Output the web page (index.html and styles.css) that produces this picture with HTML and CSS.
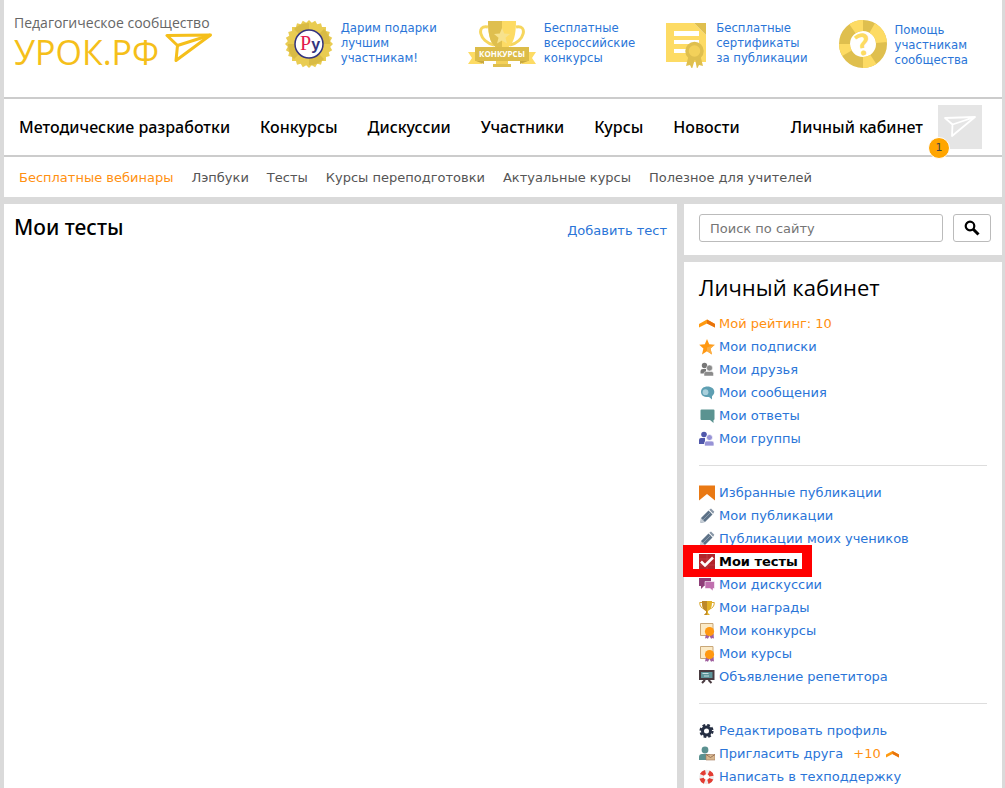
FILE: index.html
```html
<!DOCTYPE html>
<html lang="ru">
<head>
<meta charset="utf-8">
<meta name="viewport" content="width=device-width, initial-scale=1">
<title>Мои тесты — УРОК.РФ</title>
<link rel="stylesheet" href="styles.css">
</head>
<body>
<header class="site-header">
  <div class="top">
    <a class="logo" href="#">
      <span class="logo-tagline">Педагогическое сообщество</span>
      <span class="logo-row">
        <span class="logo-name">УРОК.РФ</span>
        <svg class="logo-plane" viewBox="0 0 48 30" fill="none" stroke="#f5bf1a" stroke-width="3" stroke-linejoin="round"><path d="M2 2.500 45.500 2 11 27.500 12.500 12.500z"/><path d="M45.500 2 12.500 12.500"/></svg>
      </span>
    </a>
    <nav class="promos" aria-label="Возможности">
      <a class="promo" href="#">
        <svg width="48" height="50" viewBox="0 0 48 50">
          <g fill="#e9cc52">
            <path id="seal-square" d="M24 1l24 24-24 24L0 25z"/>
            <use href="#seal-square" transform="rotate(15 24 25)"/>
            <use href="#seal-square" transform="rotate(30 24 25)"/>
            <use href="#seal-square" transform="rotate(45 24 25)"/>
            <use href="#seal-square" transform="rotate(60 24 25)"/>
            <use href="#seal-square" transform="rotate(75 24 25)"/>
          </g>
          <path d="M24 25V4a21 21 0 0 0-15 6zM24 25H3a21 21 0 0 0 6 15zM24 25v21a21 21 0 0 0 15-6zM24 25h21a21 21 0 0 0-6-15z" fill="#d9bb45"/>
          <circle cx="24" cy="25" r="14" fill="#fff" stroke="#34347f" stroke-width="1.500"/>
          <text x="15" y="31"><tspan class="seal-p">Р</tspan><tspan class="seal-y">у</tspan></text>
        </svg>
        <span>Дарим подарки<br>лучшим<br>участникам!</span>
      </a>
      <a class="promo" href="#">
        <svg width="68" height="48" viewBox="0 0 68 48">
          <path d="M20 7c-12-3-9 15 6 18M48 7c12-3 9 15-6 18" fill="none" stroke="#f6d65e" stroke-width="3"/>
          <path d="M20 1h28c0 16-3 25-11 28v12h-6V29c-8-3-11-12-11-28z" fill="#fddb64"/>
          <path d="M20 1h14v40h-3V29c-8-3-11-12-11-28z" fill="#dfbf4e"/>
          <path d="M34 8l2.200 5.500 5.800.500-4.500 3.800 1.500 5.700L34 20.500l-5 3 1.500-5.700L26 14l5.800-.500z" fill="#f7e28c"/>
          <path d="M25 44h18v3H25z" fill="#dfbf4e"/><path d="M28 41h12v3H28z" fill="#f3d15a"/>
          <path d="M0 32h14v12H0l4-6zM68 32H54v12h14l-4-6z" fill="#fddb64"/>
          <path d="M8 41h8v3zM60 41h-8v3z" fill="#c9a93f"/>
          <path d="M7 27h54v14H7z" fill="#dcbc49"/>
          <text class="ribbon-text" x="34" y="37" text-anchor="middle">КОНКУРСЫ</text>
        </svg>
        <span>Бесплатные<br>всероссийские<br>конкурсы</span>
      </a>
      <a class="promo" href="#">
        <svg width="42" height="48" viewBox="0 0 42 48">
          <path d="M0 3h28l12 12v27H0z" fill="#fddb64"/><path d="M28 3h12v12z" fill="#dfbf4e"/>
          <path d="M8 11h25v5H8zM8 20h25v4H8zM8 29h14v4H8z" fill="#fff"/>
          <path d="M23 34l-3 12 4-1 2 4 3-10 2 10 2-4 4 1-3-12z" fill="#dfbf4e"/>
          <circle cx="28.500" cy="31" r="7.500" fill="#f3d15a" stroke="#dfbf4e" stroke-width="3.500"/>
        </svg>
        <span>Бесплатные<br>сертификаты<br>за публикации</span>
      </a>
      <a class="promo promo-help" href="#">
        <svg width="48" height="48" viewBox="0 0 48 48">
          <circle cx="24" cy="24" r="18.500" fill="none" stroke="#dfbf4e" stroke-width="11"/>
          <circle cx="24" cy="24" r="18.500" pathLength="360" fill="none" stroke="#fddb64" stroke-width="11" stroke-dasharray="0 56 34 60 30 55 35 30 55 5"/>
          <text class="help-mark" x="24" y="35" text-anchor="middle" transform="rotate(-12 24 24)">?</text>
        </svg>
        <span>Помощь<br>участникам<br>сообщества</span>
      </a>
    </nav>
  </div>
  <nav class="main-nav" aria-label="Основное меню">
    <a href="#">Методические разработки</a>
    <a href="#">Конкурсы</a>
    <a href="#">Дискуссии</a>
    <a href="#">Участники</a>
    <a href="#">Курсы</a>
    <a href="#">Новости</a>
    <a class="account" href="#">Личный кабинет</a>
    <a class="avatar" href="#" aria-label="Профиль">
      <svg width="32" height="22" viewBox="0 0 32 22" fill="none" stroke="#fff" stroke-width="1.800" stroke-linejoin="round"><path d="M1 2 31 1 8 20 8.500 8.500zM31 1 8.500 8.500"/></svg>
      <span class="badge">1</span>
    </a>
  </nav>
  <nav class="sub-nav" aria-label="Разделы">
    <a class="accent" href="#">Бесплатные вебинары</a>
    <a href="#">Лэпбуки</a>
    <a href="#">Тесты</a>
    <a href="#">Курсы переподготовки</a>
    <a href="#">Актуальные курсы</a>
    <a href="#">Полезное для учителей</a>
  </nav>
</header>
<div class="columns">
  <main class="panel content">
    <h1>Мои тесты</h1>
    <a href="#">Добавить тест</a>
  </main>
  <aside class="sidebar">
    <form class="panel search">
      <input type="search" placeholder="Поиск по сайту" aria-label="Поиск по сайту">
      <button type="submit" aria-label="Найти"><svg width="16" height="16" viewBox="0 0 16 16" fill="none" stroke="#000"><circle cx="6" cy="6" r="4.300" stroke-width="2.200"/><path d="M9 9l5.500 5.500" stroke-width="3"/></svg></button>
    </form>
    <section class="panel cabinet">
      <h2>Личный кабинет</h2>
      <ul class="menu">
        <li><a class="accent" href="#"><svg viewBox="0 0 16 16"><path d="M0 8 8 3.500 16 8v3.500L8 7.500 0 11.500z" fill="#ff9a10"/><path d="M8 3.500 16 8v3.500L8 7.500z" fill="#e8730c"/></svg>Мой рейтинг: 10</a></li>
        <li><a href="#"><svg viewBox="0 0 16 16"><path d="M8 0l2.200 5.300 5.600.400-4.300 3.700 1.500 6L8 12.200 3 15.400l1.400-6L.2 5.700l5.600-.400z" fill="#ff9812"/><path d="M8 8.500l7.800-2.800-4.300 3.700 1.500 6L8 12.200z" fill="#fbad42"/></svg>Мои подписки</a></li>
        <li><a href="#"><svg viewBox="0 0 16 16"><g fill="#777"><circle cx="5.500" cy="3.500" r="2.700"/><path d="M1.500 11.500V9q0-2 2.500-2h3v4.500z"/></g><g fill="#8b8b8b" stroke="#fff" stroke-width=".5"><circle cx="10.500" cy="6" r="3"/><path d="M5 14v-2.500q0-2 2-2h5.500q2 0 2 2V14z"/></g></svg>Мои друзья</a></li>
        <li><a href="#"><svg viewBox="0 0 16 16"><path d="M8.500 1.500c4 0 6.800 2.300 6.800 5.300 0 2-1 3.400-2.300 4.400V14.500l-3-2.500C5 12.500 2 10.300 2 7s2.500-5.500 6.500-5.500z" fill="#5e9fb2"/><circle cx="6.500" cy="7.200" r="2.900" fill="#a9d0dc"/></svg>Мои сообщения</a></li>
        <li><a href="#"><svg viewBox="0 0 16 16"><path d="M2.500 1.500h12q1 0 1 1V11q0 1-1 1v3L11 12H2.500q-1 0-1-1V2.500q0-1 1-1z" fill="#5b9391"/></svg>Мои ответы</a></li>
        <li><a href="#"><svg viewBox="0 0 16 16"><g fill="#5058ab"><circle cx="5" cy="3.500" r="2.800"/><path d="M0 13V9q0-2 2-2h4v6z"/></g><g fill="#9793d6" stroke="#fff" stroke-width=".7"><circle cx="10.500" cy="6.500" r="3"/><path d="M5.500 15v-3q0-2 2-2H13q2 0 2 2v3z"/></g></svg>Мои группы</a></li>
      </ul>
      <ul class="menu">
        <li><a href="#"><svg viewBox="0 0 16 16"><path d="M0 .500h16v15L8 9l-8 6.500z" fill="#e97914"/></svg>Избранные публикации</a></li>
        <li><a href="#"><svg viewBox="0 0 16 16"><use href="#pencil"/></svg>Мои публикации</a></li>
        <li><a href="#"><svg viewBox="0 0 16 16"><use href="#pencil"/></svg>Публикации моих учеников</a></li>
        <li class="current"><a href="#" aria-current="page"><svg viewBox="0 0 16 16"><path d="M0 0h16v15.500H0z" fill="#b3242b"/><path d="M8 0v16M0 5h16M0 11h16" stroke="#c64b50" stroke-width=".6"/><path d="M2 7.500l4 4L14 3.500" fill="none" stroke="#fff" stroke-width="2.600"/></svg>Мои тесты</a></li>
        <li><a href="#"><svg viewBox="0 0 16 16"><path d="M0 1h12v8H5l-3 3V9H0z" fill="#8e3f78"/><path d="M6 4.500h9.500v7H14V14l-3-2.500H6z" fill="#c06fae" stroke="#fff" stroke-width=".6"/></svg>Мои дискуссии</a></li>
        <li><a href="#"><svg viewBox="0 0 16 16"><path d="M4 2.500H.7q0 5.500 5 6.500M12 2.500h3.300q0 5.500-5 6.500" fill="none" stroke="#d9a62e"/><path d="M3 1h10c0 5-.5 8.500-4 10v2l2 2H5l2-2v-2C3.500 9.500 3 6 3 1z" fill="#e2b128"/><path d="M3 1h5v14H5l2-2v-2C3.500 9.500 3 6 3 1z" fill="#bd8829"/></svg>Мои награды</a></li>
        <li><a href="#"><svg viewBox="0 0 16 16"><use href="#diploma"/></svg>Мои конкурсы</a></li>
        <li><a href="#"><svg viewBox="0 0 16 16"><use href="#diploma"/></svg>Мои курсы</a></li>
        <li><a href="#"><svg viewBox="0 0 16 16"><path d="M0 1h15.500v10H0z" fill="#493b40"/><path d="M2 3h11.500v6H2z" fill="#5e959a"/><path d="M3.500 4.500h6M5 7h5" stroke="#c7e0e2"/><path d="M6 11l-3 3M9.500 11l3 3" stroke="#493b40" stroke-width="2"/></svg>Объявление репетитора</a></li>
      </ul>
      <ul class="menu">
        <li><a href="#"><svg viewBox="0 0 16 16" fill="none"><circle cx="7.500" cy="8" r="4" stroke="#252e42" stroke-width="3"/><circle cx="7.500" cy="8" r="6" stroke="#252e42" stroke-width="2.200" stroke-dasharray="2.700 2.012"/></svg>Редактировать профиль</a></li>
        <li><a href="#"><svg viewBox="0 0 16 16"><circle cx="6" cy="4" r="3.400" fill="#5b9190"/><path d="M0 14v-3q0-3 3-3h6q3 0 3 3v3z" fill="#5b9190"/><path d="M7 8.500h9V14H7z" fill="#d8b78f" stroke="#a47b5c" stroke-width=".6"/><path d="M7 8.500l4.500 3 4.500-3" fill="none" stroke="#8c654c" stroke-width=".8"/></svg>Пригласить друга<span class="bonus">+10<svg viewBox="0 0 16 16"><path d="M1 8.500 7.500 5 14 8.500v3L7.500 8 1 11.500z" fill="#ff9a10"/><path d="M7.500 5 14 8.500v3L7.500 8z" fill="#e8730c"/></svg></span></a></li>
        <li><a href="#"><svg viewBox="0 0 16 16" fill="none"><circle cx="7.500" cy="8" r="5" stroke="#ececec" stroke-width="4.500"/><circle cx="7.500" cy="8" r="5" stroke="#e33c32" stroke-width="4.500" stroke-dasharray="4.500 3.354" transform="rotate(20 7.500 8)"/></svg>Написать в техподдержку</a></li>
      </ul>
    </section>
  </aside>
</div>
<svg class="sprite" aria-hidden="true">
  <symbol id="pencil" viewBox="0 0 16 16"><path d="M2 10 9.500 2.500l4 4L6 14l-4.500.700z" fill="#5d7287"/><path d="M10.300 1.800 12 .500l3.300 3.300-1.200 2z" fill="#8997a7"/><path d="M4 12l7.500-7.500" stroke="#8a9bad"/><path d="M2 10l4 4-4.500.700z" fill="#c6ced6"/></symbol>
  <symbol id="diploma" viewBox="0 0 16 16"><path d="M1.500.500h12.500v12H1.500z" fill="#fbeac7" stroke="#c9a778"/><path d="M7 11l-1 4.500 2-.5.800 1 1.700-3 1.700 3 .8-1 2 .500L14.500 11z" fill="#a0619f"/><circle cx="10.500" cy="8.500" r="4.600" fill="#ff9811"/></symbol>
</svg>
</body>
</html>
```
FILE: styles.css
```css
*,
::before,
::after {
  box-sizing: border-box;
}

body {
  display: flex;
  flex-direction: column;
  min-height: 100vh;
  margin: 0;
  padding: 0 3px 0 4px;
  background: #dadada;
  color: #000;
  font: 13px/15px Verdana, "DejaVu Sans", sans-serif;
}

a {
  color: #2a75d8;
  text-decoration: none;
}

.site-header,
.panel {
  background: #fff;
}

.top {
  display: flex;
  justify-content: space-between;
  height: 99px;
  padding: 13px 34px 0 10px;
  border-bottom: 2px solid #ccc;
}

.logo {
  display: flex;
  flex-direction: column;
  color: #f5bf1a;
  font-family: "Open Sans", sans-serif;
}

.logo-tagline {
  color: #666;
  font-size: 14px;
  line-height: 20px;
}

.logo-row {
  display: flex;
  gap: 6px;
}

.logo-name {
  font-size: 34px;
  line-height: 38px;
}

.logo-plane {
  width: 48px;
  height: 30px;
}

.promos {
  display: flex;
  gap: 31px;
  align-items: center;
  height: 62px;
}

.promo {
  display: flex;
  gap: 8px;
  align-items: center;
  font-family: Tahoma, "DejaVu Sans Condensed", sans-serif;
  font-size: 13px;
}

.promo span {
  padding-bottom: 4px;
}

.promo-help span {
  padding-bottom: 0;
}

.seal-p {
  fill: #e3194d;
  font: 20px "Liberation Serif", serif;
}

.seal-y {
  fill: #34347f;
  font: bold 16px "Liberation Sans", sans-serif;
}

.ribbon-text {
  fill: #fff;
  font: bold 8px "Open Sans", sans-serif;
}

.help-mark {
  fill: #fddb64;
  font: bold 30px "Open Sans", sans-serif;
}

.main-nav {
  display: flex;
  gap: 30px;
  align-items: center;
  height: 58px;
  padding: 0 20px 0 15px;
  border-bottom: 2px solid #ccc;
  font-family: "Noto Sans", sans-serif;
  font-size: 16px;
  font-weight: 500;
}

.main-nav a {
  color: #000;
}

.main-nav .account {
  margin-left: auto;
}

.main-nav .avatar {
  display: flex;
  position: relative;
  align-items: center;
  justify-content: center;
  width: 44px;
  height: 44px;
  margin-left: -15px;
  background: #e5e5e5;
}

.badge {
  position: absolute;
  bottom: -10px;
  left: -10px;
  width: 22px;
  height: 22px;
  border: 1px solid #fff;
  border-radius: 50%;
  background: #ffa500;
  color: #444;
  font: 11px/20px "DejaVu Sans", sans-serif;
  text-align: center;
}

.sub-nav {
  display: flex;
  gap: 18px;
  align-items: center;
  height: 40px;
  padding: 0 15px;
}

.sub-nav a {
  color: #555;
}

.sub-nav .accent,
.accent,
.bonus {
  color: #ff9010;
}

.columns {
  display: grid;
  flex: 1;
  grid-template-columns: minmax(0, 1fr) 318px;
  gap: 7px;
  margin-top: 7px;
}

.content {
  display: flex;
  align-items: flex-start;
  justify-content: space-between;
  padding: 9px 10px 0;
}

h1,
h2 {
  margin: 0;
  font: 500 21px/28px "Noto Sans", sans-serif;
}

.content a {
  margin-top: 10px;
}

.sidebar {
  display: flex;
  flex-direction: column;
  gap: 7px;
}

.search {
  display: flex;
  gap: 10px;
  padding: 10px 11px 13px 15px;
}

.search input,
.search button {
  height: 28px;
  border: 1px solid #bbb;
  border-radius: 3px;
  background: #fff;
}

.search input {
  flex: 1;
  min-width: 0;
  padding: 0 10px;
  font: inherit;
}

.search input::placeholder {
  color: #757575;
}

.search button {
  display: flex;
  align-items: center;
  justify-content: center;
  width: 38px;
  padding: 0;
}

.cabinet {
  flex: 1;
  padding: 11px 15px 0;
}

.cabinet h2 {
  margin-bottom: 11px;
  font: 400 22px/28px "Open Sans", sans-serif;
}

.menu {
  margin: 0;
  padding: 0;
  list-style: none;
}

.menu + .menu {
  margin-top: 15px;
  padding-top: 15px;
  border-top: 1px solid #ddd;
}

.menu li {
  position: relative;
}

.menu a {
  display: flex;
  gap: 4px;
  align-items: center;
  height: 23px;
}

.menu svg {
  width: 16px;
  height: 16px;
}

.menu .accent {
  color: #ff9010;
}

.bonus {
  display: flex;
  gap: 4px;
  align-items: center;
  margin-left: 6px;
}

.current a {
  color: #000;
  font-weight: bold;
}

.current::after {
  position: absolute;
  z-index: 1;
  top: -5px;
  left: -16px;
  width: 129px;
  height: 32px;
  border: solid #f00;
  border-width: 8px 10px;
  content: "";
}

.sprite {
  position: absolute;
  width: 0;
  height: 0;
}
```
